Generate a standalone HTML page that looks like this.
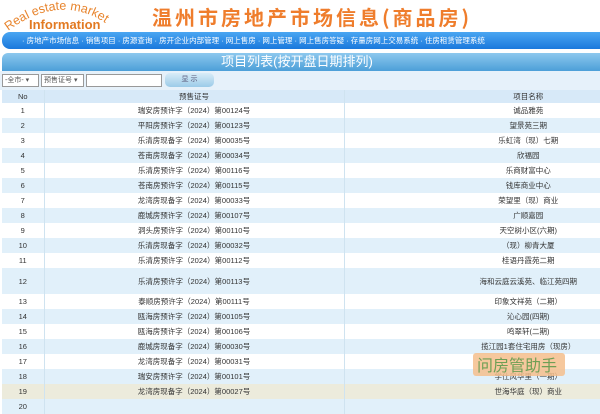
<!DOCTYPE html>
<html><head><meta charset="utf-8"><style>
*{margin:0;padding:0;box-sizing:border-box}
body{width:600px;height:400px;overflow:hidden;background:#fff;font-family:"Liberation Sans","Noto Sans CJK SC",sans-serif;position:relative}
.logo{position:absolute;left:0;top:0}
.title{position:absolute;left:152px;top:2px;color:#ef7d2c;font-size:20px;font-weight:bold;letter-spacing:3px;white-space:nowrap;font-family:"Noto Sans CJK SC",sans-serif}
.nav{position:absolute;left:2px;top:32px;width:610px;height:17px;border-radius:8px 0 0 8px;background:linear-gradient(#4aa6f2,#1a78dc);color:#fff;font-size:7.5px;line-height:17px;padding-left:20px;white-space:nowrap}
.bar{position:absolute;left:2px;top:53px;width:610px;height:18px;border-radius:6px 0 0 0;background:linear-gradient(#8dc8ee,#4c9fd8);color:#fff;font-size:13px;line-height:18px;text-align:center;padding-right:20px}
.form{position:absolute;left:0;top:71px;width:600px;height:19px;background:#e6f1fa}
.sel{position:absolute;top:3px;height:13px;border:1px solid #999;background:#fff;font-size:7px;line-height:11px;padding-left:2px;color:#555}
.btn{position:absolute;left:165px;top:2px;width:49px;height:14px;border-radius:5px;background:linear-gradient(#d8ecf8,#9ccbe8);font-size:7px;text-align:center;line-height:14px;color:#557}
table{position:absolute;left:2px;top:90px;width:710px;border-collapse:collapse;font-size:7.5px;color:#333}
td{text-align:center;border-left:1px solid #cfe3f0;height:15px;padding:0;background:#fff}
tr:nth-child(odd) td{background:#e1f0fa}
tr.h td{background:#d7e9f8;height:13px}
tr.t td{height:26px}
tr.y td{background:#ecebdc}
.wm{position:absolute;left:473px;top:353px;width:92px;height:23px;background:rgba(245,190,140,.85);border-radius:3px;color:#6f9f55;font-size:16px;line-height:23px;padding-left:4px;white-space:nowrap;font-family:"Noto Sans CJK SC",sans-serif}
</style></head><body>
<svg class="logo" width="120" height="32" viewBox="0 0 120 32">
<path id="arc" d="M8,31 Q40,7 70,10 Q97,13 116,32" fill="none"/>
<text font-family="Liberation Sans" font-size="12.5" fill="#e8852e"><textPath href="#arc">Real estate market</textPath></text>
<text x="29" y="29" font-family="Liberation Sans" font-size="13" font-weight="bold" fill="#e27a22">Information</text>
</svg>
<div class="title">温州市房地产市场信息(商品房)</div>
<div class="nav">· 房地产市场信息 · 销售项目 · 房源查询 · 房开企业内部管理 · 网上售房 · 网上管理 · 网上售房答疑 · 存量房网上交易系统 · 住房租赁管理系统</div>
<div class="bar">项目列表(按开盘日期排列)</div>
<div class="form">
<div class="sel" style="left:2px;width:37px">-全市- ▾</div>
<div class="sel" style="left:41px;width:43px">预售证号 ▾</div>
<div class="sel" style="left:86px;width:76px"></div>
<div class="btn">显 示</div>
</div>
<table>
<tr class="h"><td style="width:42px;border-left:none">No</td><td style="width:300px">预售证号</td><td>项目名称</td></tr>
<tr><td style="border-left:none">1</td><td>瑞安房预许字（2024）第00124号</td><td>诚品雅苑</td></tr>
<tr><td style="border-left:none">2</td><td>平阳房预许字（2024）第00123号</td><td>望景苑三期</td></tr>
<tr><td style="border-left:none">3</td><td>乐清房现备字（2024）第00035号</td><td>乐虹湾（现）七期</td></tr>
<tr><td style="border-left:none">4</td><td>苍南房现备字（2024）第00034号</td><td>欣福园</td></tr>
<tr><td style="border-left:none">5</td><td>乐清房预许字（2024）第00116号</td><td>乐商财富中心</td></tr>
<tr><td style="border-left:none">6</td><td>苍南房预许字（2024）第00115号</td><td>钱库商业中心</td></tr>
<tr><td style="border-left:none">7</td><td>龙湾房现备字（2024）第00033号</td><td>荣望里（现）商业</td></tr>
<tr><td style="border-left:none">8</td><td>鹿城房预许字（2024）第00107号</td><td>广顺嘉园</td></tr>
<tr><td style="border-left:none">9</td><td>洞头房预许字（2024）第00110号</td><td>天空树小区(六期)</td></tr>
<tr><td style="border-left:none">10</td><td>乐清房现备字（2024）第00032号</td><td>（现）柳青大厦</td></tr>
<tr><td style="border-left:none">11</td><td>乐清房预许字（2024）第00112号</td><td>桂语丹霞苑二期</td></tr>
<tr class="t"><td style="border-left:none">12</td><td>乐清房预许字（2024）第00113号</td><td>海和云庭云溪苑、临江苑四期</td></tr>
<tr><td style="border-left:none">13</td><td>泰顺房预许字（2024）第00111号</td><td>印象文祥苑（二期）</td></tr>
<tr><td style="border-left:none">14</td><td>瓯海房预许字（2024）第00105号</td><td>沁心园(四期)</td></tr>
<tr><td style="border-left:none">15</td><td>瓯海房预许字（2024）第00106号</td><td>鸣翠轩(二期)</td></tr>
<tr><td style="border-left:none">16</td><td>鹿城房现备字（2024）第00030号</td><td>揽江园1套住宅用房（现房）</td></tr>
<tr><td style="border-left:none">17</td><td>龙湾房现备字（2024）第00031号</td><td>&nbsp;</td></tr>
<tr><td style="border-left:none">18</td><td>瑞安房预许字（2024）第00101号</td><td>学仕风华里（一期）</td></tr>
<tr class="y"><td style="border-left:none">19</td><td>龙湾房现备字（2024）第00027号</td><td>世海华庭（现）商业</td></tr>
<tr><td style="border-left:none">20</td><td></td><td></td></tr>
</table>
<div class="wm">问房管助手</div>
</body></html>
